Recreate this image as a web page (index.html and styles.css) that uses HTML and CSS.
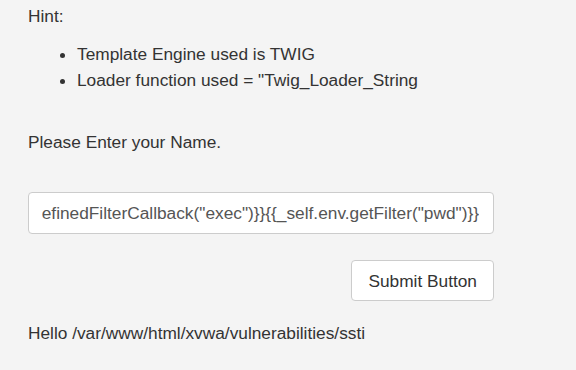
FILE: index.html
```html
<!DOCTYPE html>
<html>
<head>
<meta charset="utf-8">
<link rel="stylesheet" href="styles.css">
</head>
<body>
<div class="page">
  <p class="hint">Hint:</p>
  <ul class="hint-list">
    <li>Template Engine used is TWIG</li>
    <li>Loader function used = "Twig_Loader_String</li>
  </ul>
  <p class="prompt">Please Enter your Name.</p>
  <div class="field"><div class="field-inner"><span>{{_self.env.registerUndefinedFilterCallback("exec")}}{{_self.env.getFilter("pwd")}}</span></div></div>
  <div class="actions"><button class="btn">Submit Button</button></div>
  <p class="result">Hello /var/www/html/xvwa/vulnerabilities/ssti</p>
</div>
</body>
</html>
```
FILE: styles.css
```css
html, body {
  margin: 0;
  padding: 0;
  background: #f4f4f4;
}
body {
  font-family: "Liberation Sans", Arial, sans-serif;
  font-size: 17.3px;
  line-height: 26px;
  color: #333;
}
.page {
  width: 466px;
  padding: 3px 0 0 28px;
}
p { margin: 0; }
.hint-list {
  margin: 12px 0 0 0;
  padding-left: 49px;
}
.prompt {
  margin-top: 36px;
}
.field {
  box-sizing: border-box;
  margin-top: 37px;
  height: 42px;
  border: 1px solid #ccc;
  border-radius: 4px;
  background: #fff;
  display: flex;
  align-items: center;
  padding: 0 14px 0 13px;
  color: #555;
}
.field-inner {
  flex: 1;
  min-width: 0;
  display: flex;
  justify-content: flex-end;
  overflow: hidden;
  white-space: nowrap;
}
.field-inner span { flex: none; }
.actions {
  display: flex;
  justify-content: flex-end;
  margin-top: 26px;
}
.btn {
  box-sizing: border-box;
  font: inherit;
  color: #333;
  background: #fff;
  border: 1px solid #ccc;
  border-radius: 4px;
  height: 41px;
  padding: 0 16px;
}
.result {
  margin-top: 19px;
}
```
